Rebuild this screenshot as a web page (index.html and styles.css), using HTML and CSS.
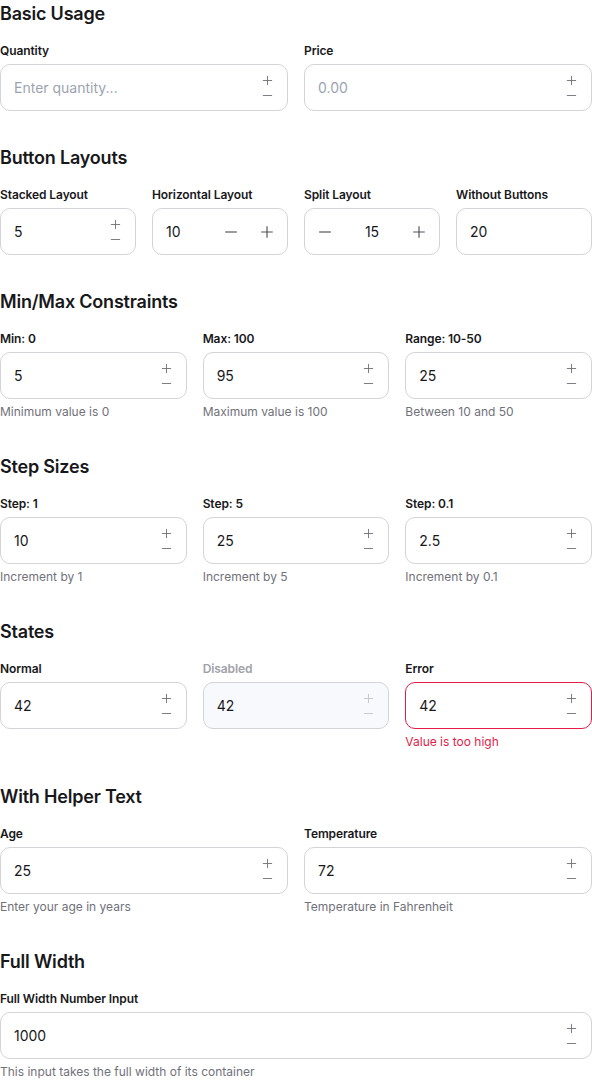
FILE: index.html
```html
<!DOCTYPE html>
<html>
<head>
<meta charset="utf-8">
<link rel="stylesheet" href="styles.css">
</head>
<body>
<svg width="0" height="0" style="position:absolute">
  <defs>
    <symbol id="plus" viewBox="0 0 12 12"><path d="M6 1v10M1 6h10" stroke="currentColor" fill="none"/></symbol>
    <symbol id="minus" viewBox="0 0 12 12"><path d="M1 6h10" stroke="currentColor" fill="none"/></symbol>
  </defs>
</svg>
<main class="page">
  <section class="section">
    <h2 class="title">Basic Usage</h2>
    <div class="grid cols-2">
      <div class="field">
        <label class="label">Quantity</label>
        <div class="box"><span class="value placeholder">Enter quantity...</span>
          <div class="stack"><svg class="si"><use href="#plus"/></svg><svg class="si"><use href="#minus"/></svg></div></div>
      </div>
      <div class="field">
        <label class="label">Price</label>
        <div class="box"><span class="value placeholder">0.00</span>
          <div class="stack"><svg class="si"><use href="#plus"/></svg><svg class="si"><use href="#minus"/></svg></div></div>
      </div>
    </div>
  </section>

  <section class="section">
    <h2 class="title">Button Layouts</h2>
    <div class="grid cols-4">
      <div class="field">
        <label class="label">Stacked Layout</label>
        <div class="box"><span class="value">5</span>
          <div class="stack"><svg class="si"><use href="#plus"/></svg><svg class="si"><use href="#minus"/></svg></div></div>
      </div>
      <div class="field">
        <label class="label">Horizontal Layout</label>
        <div class="box"><span class="value">10</span>
          <div class="hbtns"><svg class="hi"><use href="#minus"/></svg><svg class="hi"><use href="#plus"/></svg></div></div>
      </div>
      <div class="field">
        <label class="label">Split Layout</label>
        <div class="box split"><svg class="hi"><use href="#minus"/></svg><span class="value center">15</span><svg class="hi"><use href="#plus"/></svg></div>
      </div>
      <div class="field">
        <label class="label">Without Buttons</label>
        <div class="box"><span class="value">20</span></div>
      </div>
    </div>
  </section>

  <section class="section">
    <h2 class="title">Min/Max Constraints</h2>
    <div class="grid cols-3">
      <div class="field">
        <label class="label">Min: 0</label>
        <div class="box"><span class="value">5</span>
          <div class="stack"><svg class="si"><use href="#plus"/></svg><svg class="si"><use href="#minus"/></svg></div></div>
        <p class="help">Minimum value is 0</p>
      </div>
      <div class="field">
        <label class="label">Max: 100</label>
        <div class="box"><span class="value">95</span>
          <div class="stack"><svg class="si"><use href="#plus"/></svg><svg class="si"><use href="#minus"/></svg></div></div>
        <p class="help">Maximum value is 100</p>
      </div>
      <div class="field">
        <label class="label">Range: 10-50</label>
        <div class="box"><span class="value">25</span>
          <div class="stack"><svg class="si"><use href="#plus"/></svg><svg class="si"><use href="#minus"/></svg></div></div>
        <p class="help">Between 10 and 50</p>
      </div>
    </div>
  </section>

  <section class="section">
    <h2 class="title">Step Sizes</h2>
    <div class="grid cols-3">
      <div class="field">
        <label class="label">Step: 1</label>
        <div class="box"><span class="value">10</span>
          <div class="stack"><svg class="si"><use href="#plus"/></svg><svg class="si"><use href="#minus"/></svg></div></div>
        <p class="help">Increment by 1</p>
      </div>
      <div class="field">
        <label class="label">Step: 5</label>
        <div class="box"><span class="value">25</span>
          <div class="stack"><svg class="si"><use href="#plus"/></svg><svg class="si"><use href="#minus"/></svg></div></div>
        <p class="help">Increment by 5</p>
      </div>
      <div class="field">
        <label class="label">Step: 0.1</label>
        <div class="box"><span class="value">2.5</span>
          <div class="stack"><svg class="si"><use href="#plus"/></svg><svg class="si"><use href="#minus"/></svg></div></div>
        <p class="help">Increment by 0.1</p>
      </div>
    </div>
  </section>

  <section class="section">
    <h2 class="title">States</h2>
    <div class="grid cols-3">
      <div class="field">
        <label class="label">Normal</label>
        <div class="box"><span class="value">42</span>
          <div class="stack"><svg class="si"><use href="#plus"/></svg><svg class="si"><use href="#minus"/></svg></div></div>
      </div>
      <div class="field">
        <label class="label muted">Disabled</label>
        <div class="box disabled"><span class="value">42</span>
          <div class="stack"><svg class="si"><use href="#plus"/></svg><svg class="si"><use href="#minus"/></svg></div></div>
      </div>
      <div class="field">
        <label class="label">Error</label>
        <div class="box error"><span class="value">42</span>
          <div class="stack"><svg class="si"><use href="#plus"/></svg><svg class="si"><use href="#minus"/></svg></div></div>
        <p class="help err">Value is too high</p>
      </div>
    </div>
  </section>

  <section class="section">
    <h2 class="title">With Helper Text</h2>
    <div class="grid cols-2">
      <div class="field">
        <label class="label">Age</label>
        <div class="box"><span class="value">25</span>
          <div class="stack"><svg class="si"><use href="#plus"/></svg><svg class="si"><use href="#minus"/></svg></div></div>
        <p class="help">Enter your age in years</p>
      </div>
      <div class="field">
        <label class="label">Temperature</label>
        <div class="box"><span class="value">72</span>
          <div class="stack"><svg class="si"><use href="#plus"/></svg><svg class="si"><use href="#minus"/></svg></div></div>
        <p class="help">Temperature in Fahrenheit</p>
      </div>
    </div>
  </section>

  <section class="section">
    <h2 class="title">Full Width</h2>
    <div class="field">
      <label class="label">Full Width Number Input</label>
      <div class="box"><span class="value">1000</span>
        <div class="stack"><svg class="si"><use href="#plus"/></svg><svg class="si"><use href="#minus"/></svg></div></div>
      <p class="help">This input takes the full width of its container</p>
    </div>
  </section>
</main>
</body>
</html>
```

FILE: styles.css
```css
* { box-sizing: border-box; }
html, body { margin: 0; padding: 0; background: #ffffff; }
body {
  font-family: Inter, "Noto Sans", sans-serif;
  color: #18181b;
  width: 592px;
}
.page { display: flex; flex-direction: column; gap: 33px; }
.section { display: flex; flex-direction: column; }
.title {
  margin: 0 0 14px 0;
  font-size: 18px;
  line-height: 28px;
  font-weight: 600;
  letter-spacing: -0.2px;
  color: #18181b;
}
.grid { display: grid; column-gap: 16px; }
.cols-2 { grid-template-columns: repeat(2, 1fr); }
.cols-3 { grid-template-columns: repeat(3, 1fr); }
.cols-4 { grid-template-columns: repeat(4, 1fr); }
.field { display: flex; flex-direction: column; min-width: 0; }
.label {
  font-size: 12px;
  line-height: 16px;
  font-weight: 600;
  color: #18181b;
  margin-bottom: 6px;
  padding-top: 1px;
  height: 16px;
  letter-spacing: -0.1px;
}
.label.muted { color: #a1a1aa; }
.box {
  height: 47px;
  border: 1px solid #d4d4d8;
  border-radius: 10px;
  background: #fff;
  display: flex;
  align-items: center;
  padding: 0 14px 0 13px;
}
.value {
  flex: 1;
  font-size: 14px;
  color: #18181b;
  white-space: nowrap;
}
.placeholder { color: #9ca3af; }
.value.center { text-align: center; }
.stack {
  display: flex;
  flex-direction: column;
  align-items: center;
  gap: 4px;
  color: #71717a;
}
.si { width: 11px; height: 11px; display: block; }
.hbtns { display: flex; align-items: center; gap: 22px; color: #52525b; margin-right: -1px; }
.hi { width: 14px; height: 14px; display: block; color: #52525b; }
.split { padding: 0 13px 0 13px; }
.disabled { background: #f8f9fc; }
.disabled .stack { color: #c4c4ca; }
.error { border-color: #e11d48; }
.help {
  margin: 5px 0 0 0;
  font-size: 12px;
  line-height: 16px;
  color: #71717a;
}
.help.err { color: #e11d48; }
```
